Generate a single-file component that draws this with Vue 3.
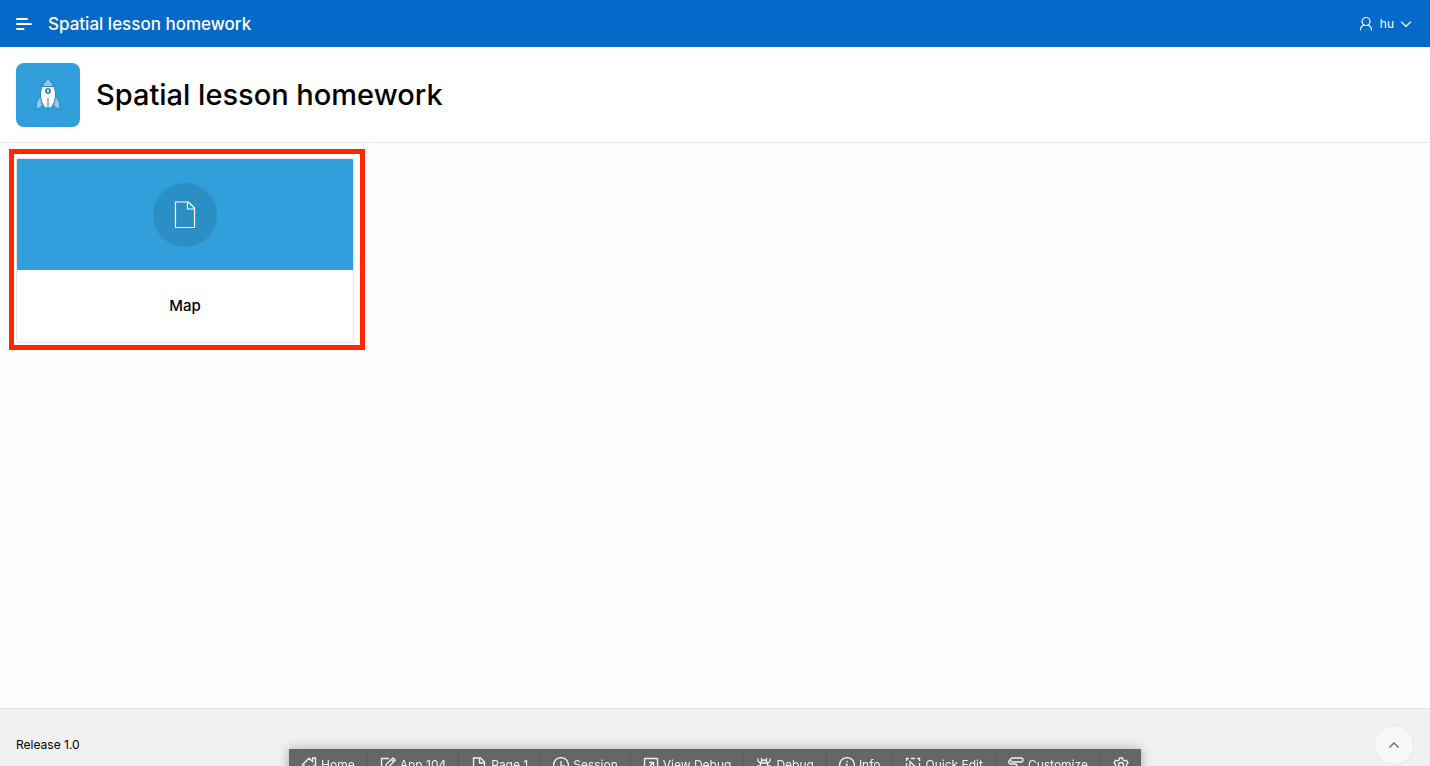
<script setup>
const appName = 'Spatial lesson homework'

const cards = [{ title: 'Map', href: '#map', highlighted: true }]

const tools = [
  { label: 'Home', icon: ['M.7 8.500 8 1.200 11.500 4.500V1h3v6.500l.8 1', 'M3 7.500v7.500h10V7.500', 'M8 8.500v2'] },
  { label: 'App 104', icon: ['M9 1.500H1.500v13H13V9', 'M5.500 10.500l1-3.500 6.500-6 2.200 2.200L9 9.500z', 'M11.500 2.500l2 2'] },
  { label: 'Page 1', icon: ['M2.500 1h7l4 4v10h-11z', 'M8.500 1v5h5'] },
  { label: 'Session', icon: ['M8 .600a7.400 7.400 0 1 1 0 14.800a7.400 7.400 0 1 1 0-14.800', 'M8 4v5h4'] },
  { label: 'View Debug', icon: ['M2 1.500h12a.5.5 0 0 1 .5.5v12a.5.5 0 0 1-.5.5H2a.5.5 0 0 1-.5-.5V2a.5.5 0 0 1 .5-.5z', 'M5 11l5.500-5.500', 'M6 5.500h4.500V10'] },
  { label: 'Debug', icon: ['M5 6a3 3 0 0 1 6 0', 'M4.500 6h7v5a3.500 3.500 0 0 1-7 0z', 'M1.800 1.500c0 3 .7 4 2.700 4.500M14.200 1.500c0 3-.7 4-2.700 4.500', 'M5 1l1.200 2.500M11 1 9.800 3.500', 'M1 9h3.500M11.500 9H15M2 14l3-2M14 14l-3-2'] },
  { label: 'Info', icon: ['M8 .600a7.400 7.400 0 1 1 0 14.800a7.400 7.400 0 1 1 0-14.800', 'M8 3.800v1.600', 'M6.500 7.500H8V12M6 12h4'] },
  { label: 'Quick Edit', icon: ['M1.500 4V1.500H4M6 1.500h4M12 1.500h2.500V4M1.500 6v4M14.500 6v4M1.500 12v2.500H4M14.500 12v2.500H12', 'M5 4.500v8.500l2.500-2.500H11z'] },
  { label: 'Customize', icon: ['M4.500 1H13a2 2 0 0 1 0 4H4.500a2 2 0 0 1 0-4z', 'M3 2.500a2.200 2.200 0 0 0 0 4.500H7a1.500 1.500 0 0 1 0 4v3'] }
]
</script>

<template>
  <div class="page">
    <header class="topbar">
      <button class="nav-toggle" type="button" aria-label="Main navigation">
        <svg width="16" height="14" viewBox="0 0 16 14" aria-hidden="true">
          <path d="M1 2h10M1 7h14M1 12h6.500" />
        </svg>
      </button>
      <a class="brand" href="#home">{{ appName }}</a>
      <button class="account" type="button">
        <svg width="16" height="16" viewBox="0 0 16 16" aria-hidden="true">
          <circle cx="8" cy="5.500" r="4" />
          <path d="M2.500 14c0-2.500 1.500-4 3.500-5M13.500 14c0-2.500-1.500-4-3.500-5" />
        </svg>
        <span>hu</span>
        <svg width="12" height="16" viewBox="0 0 12 16" aria-hidden="true">
          <path d="M1.500 6 6 10.500 10.500 6" />
        </svg>
      </button>
    </header>

    <div class="hero">
      <div class="app-icon">
        <svg width="26" height="34" viewBox="0 0 26 34" aria-hidden="true">
          <path class="fin" d="M6 18 2.500 22Q1 24 1.200 32l6.300-4zM20 18l3.500 4q1.500 2 1.300 10l-6.300-4z" />
          <path class="hull" d="M13 1C8 5 5.500 10 5.500 17c0 5 1.500 9 4.500 13h6c3-4 4.500-8 4.500-13C20.500 10 18 5 13 1z" />
          <path class="nose" d="M13 1C10.300 3 8.400 5.500 7.200 8.500h11.600C17.600 5.500 15.700 3 13 1z" />
          <circle class="port" cx="13" cy="13" r="2.200" />
          <path class="spine" d="M13 20v12" />
        </svg>
      </div>
      <h1>{{ appName }}</h1>
    </div>

    <main>
      <ul class="cards">
        <li v-for="card in cards" :key="card.title" :class="{ highlighted: card.highlighted }">
          <a class="card" :href="card.href">
            <span class="card-media">
              <span class="card-icon">
                <svg width="22" height="28" viewBox="0 0 22 28" aria-hidden="true">
                  <path d="M1.500 1h13l6 6v19.500h-19zM13.500 1.500v6.500h6.500" />
                </svg>
              </span>
            </span>
            <span class="card-title">{{ card.title }}</span>
          </a>
        </li>
      </ul>
    </main>

    <footer>
      <span>Release 1.0</span>
      <button class="to-top" type="button" aria-label="Back to top">
        <svg width="12" height="8" viewBox="0 0 12 8" aria-hidden="true">
          <path d="M1.500 6.500 6 2l4.500 4.500" />
        </svg>
      </button>
    </footer>

    <nav class="devbar" aria-label="Developer toolbar">
      <button v-for="tool in tools" :key="tool.label" type="button">
        <svg width="16" height="16" viewBox="0 0 16 16" aria-hidden="true">
          <path v-for="d in tool.icon" :key="d" :d="d" />
        </svg>
        <span>{{ tool.label }}</span>
      </button>
      <button type="button" aria-label="Toolbar options">
        <svg width="16" height="16" viewBox="0 0 16 16" aria-hidden="true">
          <path d="M6.500 1h3l.5 2 1.500.9 2-.6 1.500 2.600L13.500 7.300v1.400L15 10.100l-1.500 2.600-2-.6L10 13l-.5 2h-3L6 13l-1.500-.9-2 .6L1 10.100l1.500-1.400V7.300L1 5.900l1.500-2.600 2 .6L6 3z" />
          <circle cx="8" cy="8" r="2.500" />
        </svg>
      </button>
    </nav>
  </div>
</template>

<style>
body {
  margin: 0;
}
</style>

<style scoped>
.page {
  display: flex;
  flex-direction: column;
  min-height: 100vh;
  background: #fdfdfd;
  color: #000;
  font-family: Inter, "Liberation Sans", sans-serif;
  font-size: 12px;
}

.page * {
  box-sizing: border-box;
}

button {
  padding: 0;
  border: 0;
  background: none;
  color: inherit;
  font: inherit;
  cursor: pointer;
}

a {
  color: inherit;
  text-decoration: none;
}

svg {
  display: block;
  flex: none;
  fill: none;
  stroke: currentColor;
}

.topbar {
  display: flex;
  align-items: center;
  gap: 16px;
  height: 47px;
  padding: 0 18px 0 16px;
  background: #046aca;
  color: #fff;
}

.nav-toggle svg {
  stroke-width: 2;
  stroke-linecap: round;
}

.brand {
  font-size: 17px;
  font-weight: 500;
  line-height: 24px;
}

.account {
  display: flex;
  align-items: center;
  gap: 6px;
  margin-left: auto;
  line-height: 16px;
}

.account svg {
  stroke-width: 1.2;
  stroke-linecap: round;
}

.hero {
  display: flex;
  align-items: center;
  gap: 16px;
  height: 96px;
  padding: 0 16px;
  border-bottom: 1px solid #e6e6e6;
  background: #fff;
}

.app-icon {
  display: grid;
  place-items: center;
  width: 64px;
  height: 64px;
  border-radius: 8px;
  background: #309fdb;
}

.hull {
  fill: #fff;
  stroke: #2784b8;
}

.fin,
.nose {
  fill: #8fc9eb;
  stroke: #2784b8;
}

.port {
  fill: #b9def3;
  stroke: #2784b8;
  stroke-width: 1.5;
}

.spine {
  stroke: #2784b8;
}

h1 {
  margin: 0;
  font-size: 29px;
  font-weight: 500;
  line-height: 40px;
}

main {
  flex: 1;
  padding: 15px 16px;
}

.cards {
  display: grid;
  grid-template-columns: repeat(auto-fill, 338px);
  gap: 16px;
  margin: 0;
  padding: 0;
  list-style: none;
}

.cards li {
  position: relative;
}

.highlighted::before {
  content: "";
  position: absolute;
  inset: -9px -11px -7px -7px;
  border: 5px solid #ff2600;
  background: #fff;
}

.card {
  position: relative;
  display: block;
  overflow: hidden;
  border: 1px solid #e6e6e6;
  border-radius: 2px;
  background: #fff;
}

.card-media {
  display: grid;
  place-items: center;
  height: 111px;
  background: #309fdb;
}

.card-icon {
  display: grid;
  place-items: center;
  width: 64px;
  height: 64px;
  border-radius: 50%;
  background: #2b8fc5;
  color: #fff;
}

.card-icon svg {
  stroke-width: 1.2;
}

.card-title {
  display: block;
  padding: 24px 16px;
  font-size: 15px;
  font-weight: 500;
  line-height: 24px;
  text-align: center;
}

footer {
  display: flex;
  align-items: center;
  justify-content: space-between;
  height: 58px;
  padding: 14px 16px 0;
  border-top: 1px solid #e0e0e0;
  background: #f1f1f1;
}

.to-top {
  display: grid;
  place-items: center;
  width: 40px;
  height: 40px;
  border: 1px solid #e8e8e8;
  border-radius: 50%;
  background: #f8f8f8;
  color: #666;
}

.to-top svg {
  stroke-width: 1.3;
}

.devbar {
  position: fixed;
  bottom: -15px;
  left: 50%;
  display: flex;
  transform: translateX(-50%);
  background: #666;
  box-shadow: 0 0 12px rgba(0, 0, 0, 0.3);
  color: #f2f2f2;
}

.devbar button {
  display: flex;
  align-items: center;
  gap: 4px;
  height: 32px;
  padding: 0 12px;
  border-right: 1px solid #5c5c5c;
  line-height: 16px;
  white-space: nowrap;
}

.devbar svg {
  stroke-width: 1.3;
}

.devbar button:last-child {
  border-right: 0;
}
</style>
